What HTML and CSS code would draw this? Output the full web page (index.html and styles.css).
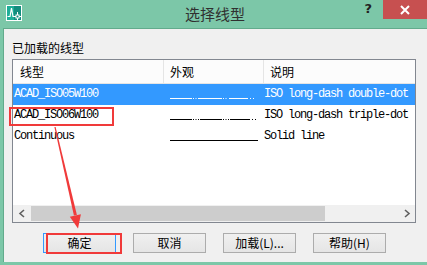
FILE: index.html
```html
<!DOCTYPE html>
<html lang="zh">
<head>
<meta charset="utf-8">
<title>选择线型</title>
<link rel="stylesheet" href="styles.css">
</head>
<body>
<div class="window">
  <div class="titlebar">
    <div class="tb-left">
      <svg class="app-icon" width="16" height="16" viewBox="0 0 16 16">
        <rect x="0.5" y="0.5" width="15" height="15" fill="#138d7e" stroke="#ffffff"/>
        <rect x="1" y="1" width="7" height="14" fill="#1fae98"/>
        <path d="M1.5 11.5 H4 L5.5 3 L7 11.5 H10" fill="none" stroke="#ffffff" stroke-width="1.2"/>
        <path d="M11.5 7 V15 M8.5 11.5 H15" stroke="#ffffff" stroke-width="1"/>
        <rect x="10" y="10" width="3" height="3" fill="#138d7e" stroke="#ffffff" stroke-width="1"/>
      </svg>
    </div>
    <div class="title">选择线型</div>
    <div class="tb-right">
      <span class="help">?</span>
      <span class="close">
        <svg width="10" height="10" viewBox="0 0 10 10"><path d="M1 1 L9 9 M9 1 L1 9" stroke="#ffffff" stroke-width="2"/></svg>
      </span>
    </div>
  </div>
  <div class="body">
    <div class="label">已加载的线型</div>
    <div class="list">
      <div class="header grid">
        <div class="hcell c1">线型</div>
        <div class="hcell c2">外观</div>
        <div class="hcell c3">说明</div>
      </div>
      <div class="rows">
        <div class="row grid selected">
          <div class="cell c1 mono">ACAD_ISO05W100</div>
          <div class="cell c2">
            <svg width="92" height="21" viewBox="0 0 92 21"><path d="M0 14.5 H22 M23 14.5 H24 M25.5 14.5 H26.5 M28 14.5 H52 M53 14.5 H54 M55.5 14.5 H56.5 M59 14.5 H78 M80 14.5 H81 M83 14.5 H84" stroke="currentColor" stroke-width="1"/></svg>
          </div>
          <div class="cell c3 mono">ISO long-dash double-dot</div>
        </div>
        <div class="row grid">
          <div class="cell c1 mono">ACAD_ISO06W100</div>
          <div class="cell c2">
            <svg width="92" height="21" viewBox="0 0 92 21"><path d="M0 14.5 H22 M23 14.5 H24 M25.5 14.5 H26.5 M28 14.5 H29 M30 14.5 H52 M53 14.5 H54 M55.5 14.5 H56.5 M58 14.5 H59 M60 14.5 H80 M82 14.5 H83 M85 14.5 H86" stroke="currentColor" stroke-width="1"/></svg>
          </div>
          <div class="cell c3 mono">ISO long-dash triple-dot</div>
        </div>
        <div class="row grid">
          <div class="cell c1 mono">Continuous</div>
          <div class="cell c2">
            <svg width="92" height="21" viewBox="0 0 92 21"><path d="M0 14.5 H88" stroke="currentColor" stroke-width="1"/></svg>
          </div>
          <div class="cell c3 mono">Solid line</div>
        </div>
      </div>
      <div class="scrollbar">
        <div class="sb-btn">
          <svg width="8" height="9" viewBox="0 0 8 9"><path d="M6 1 L2 4.5 L6 8" fill="none" stroke="#606060" stroke-width="1.6"/></svg>
        </div>
        <div class="sb-track"><div class="sb-thumb"></div></div>
        <div class="sb-btn">
          <svg width="8" height="9" viewBox="0 0 8 9"><path d="M2 1 L6 4.5 L2 8" fill="none" stroke="#606060" stroke-width="1.6"/></svg>
        </div>
      </div>
    </div>
    <div class="buttons">
      <button class="btn default">确定</button>
      <button class="btn">取消</button>
      <button class="btn">加载(L)...</button>
      <button class="btn">帮助(H)</button>
    </div>
  </div>
  <div class="mark mark-row"></div>
  <div class="mark mark-ok"></div>
  <svg class="arrow" width="427" height="265" viewBox="0 0 427 265">
    <polygon points="54.4,127.1 55.6,126.9 76.9,215 73.9,215.6" fill="#f03a3a"/>
    <polygon points="69.8,216.8 80.9,214.2 78,228.5" fill="#f03a3a"/>
  </svg>
</div>
</body>
</html>
```

FILE: styles.css
```css
* { box-sizing: border-box; }
html, body { margin: 0; padding: 0; }
body {
  width: 427px;
  height: 265px;
  overflow: hidden;
  font-family: "Noto Sans CJK SC", "Noto Sans", sans-serif;
  font-size: 12px;
  color: #000;
}
.window {
  position: relative;
  width: 427px;
  height: 265px;
  background: #7cc7a8;
  display: flex;
  flex-direction: column;
  padding-bottom: 3px;
}
.titlebar {
  height: 28px;
  flex: none;
  display: grid;
  grid-template-columns: 1fr auto 1fr;
  padding-left: 3px;
  align-items: start;
}
.tb-left { display: flex; }
.app-icon { display: block; margin: 5px 0 0 3px; }
.title {
  font-size: 15px;
  line-height: 27px;
  color: #303030;
}
.tb-right {
  display: flex;
  justify-content: flex-end;
  align-items: flex-start;
}
.help {
  font-family: "DejaVu Sans", sans-serif;
  font-weight: bold;
  font-size: 13px;
  line-height: 15px;
  color: #222;
  margin-top: 1px;
  margin-right: 11px;
}
.close {
  width: 44px;
  height: 19px;
  background: #c75050;
  display: flex;
  align-items: center;
  justify-content: center;
}
.close svg { display: block; }
.body {
  flex: 1;
  margin-left: 3px;
  background: #f0f0f0;
  border-left: 1px solid #62ab8c;
  border-top: 1px solid #62ab8c;
  padding: 12px 0 0 8px;
  display: flex;
  flex-direction: column;
}
.label {
  line-height: 14px;
  height: 14px;
  color: #000;
}
.list {
  margin-top: 4px;
  width: 404px;
  height: 164px;
  border: 1px solid #828790;
  background: #fff;
  display: flex;
  flex-direction: column;
  overflow: hidden;
}
.grid {
  display: grid;
  grid-template-columns: 151px 100px 1fr;
}
.header {
  height: 24px;
  flex: none;
  background: #fcfcfc;
  border-bottom: 1px solid #e5e5e5;
}
.hcell {
  line-height: 23px;
  padding-left: 7px;
  white-space: nowrap;
}
.hcell.c1, .hcell.c2 { border-right: 1px solid #e5e5e5; }
.hcell.c2, .hcell.c3 { padding-left: 6px; }
.rows { flex: 1; }
.row { height: 21px; color: #000; }
.row.selected { background: #3399ff; color: #fff; }
.cell {
  height: 21px;
  line-height: 21px;
  white-space: nowrap;
  overflow: hidden;
}
.cell.c1 { padding-left: 1px; }
.cell.c2 { padding-left: 6px; }
.cell.c2 svg { display: block; }
.cell.c3 { padding-left: 0; }
.mono {
  font-family: "Liberation Mono", monospace;
  font-size: 12px;
  letter-spacing: -1.2px;
}
.scrollbar {
  height: 17px;
  flex: none;
  background: #f0f0f0;
  display: flex;
}
.sb-btn {
  width: 17px;
  display: flex;
  align-items: center;
  justify-content: center;
}
.sb-btn:first-child { width: 18px; }
.sb-track { flex: 1; padding: 1px 0; }
.sb-thumb {
  width: 294px;
  height: 15px;
  background: #cdcdcd;
}
.buttons {
  margin-top: 10px;
  margin-left: 31px;
  display: flex;
  gap: 17px;
}
.btn {
  width: 73px;
  height: 20px;
  padding: 0;
  border: 1px solid #acacac;
  background: linear-gradient(#f0f0f0, #e5e5e5);
  font-family: "Noto Sans CJK SC", "Noto Sans", sans-serif;
  font-size: 12px;
  line-height: 18px;
  color: #000;
}
.btn.default { border-color: #3399ff; }
.mark {
  position: absolute;
  border: 2px solid #f03a3a;
}
.mark-row { left: 9px; top: 107px; width: 105px; height: 19px; }
.mark-ok { left: 46px; top: 233px; width: 76px; height: 21px; }
.arrow { position: absolute; left: 0; top: 0; pointer-events: none; }
```
